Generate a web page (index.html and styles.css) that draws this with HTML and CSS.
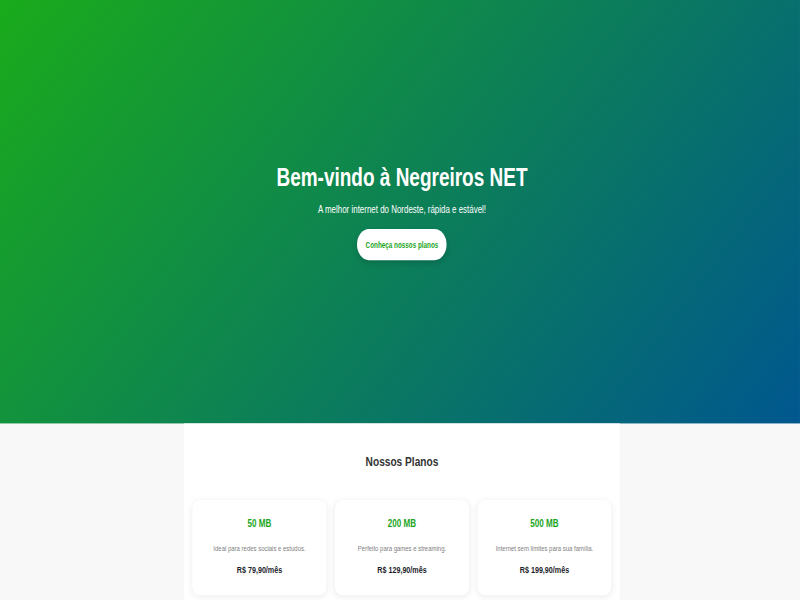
FILE: index.html
```html
<!DOCTYPE html>
<html lang="pt-BR">
<head>
<meta charset="UTF-8">
<title>Negreiros NET</title>
<link rel="stylesheet" href="styles.css">
</head>
<body>
<div class="page">
  <header class="hero">
    <h1 class="hero-title">Bem-vindo à Negreiros NET</h1>
    <p class="hero-sub">A melhor internet do Nordeste, rápida e estável!</p>
    <a class="hero-btn" href="#planos">Conheça nossos planos</a>
  </header>
  <main class="plans-wrap">
    <section class="plans" id="planos">
      <h2 class="plans-title">Nossos Planos</h2>
      <div class="plan-grid">
        <div class="plan-card">
          <h3 class="plan-name">50 MB</h3>
          <p class="plan-desc">Ideal para redes sociais e estudos.</p>
          <p class="plan-price">R$ 79,90/mês</p>
        </div>
        <div class="plan-card">
          <h3 class="plan-name">200 MB</h3>
          <p class="plan-desc">Perfeito para games e streaming.</p>
          <p class="plan-price">R$ 129,90/mês</p>
        </div>
        <div class="plan-card">
          <h3 class="plan-name">500 MB</h3>
          <p class="plan-desc">Internet sem limites para sua família.</p>
          <p class="plan-price">R$ 199,90/mês</p>
        </div>
      </div>
    </section>
  </main>
</div>
</body>
</html>
```
FILE: styles.css
```css
html, body {
  margin: 0;
  padding: 0;
  overflow: hidden;
  background: #f8f8f8;
}

.page {
  width: 1340px;
  transform: scale(0.597, 0.78125);
  transform-origin: 0 0;
  font-family: "Liberation Sans", Arial, sans-serif;
  background: #f8f8f8;
}

.hero {
  height: 542px;
  box-sizing: border-box;
  padding-left: 6.7px;
  display: flex;
  flex-direction: column;
  align-items: center;
  justify-content: center;
  background: linear-gradient(135deg, #1aab1b 0%, #00578f 100%);
  color: #fff;
  text-align: center;
}

.hero-title {
  margin: 0 0 15px;
  font-size: 31.8px;
  font-weight: bold;
}

.hero-sub {
  margin: 0 0 17px;
  font-size: 13.3px;
}

.hero-btn {
  display: inline-block;
  padding: 14px 14px;
  font-size: 10.6px;
  font-weight: bold;
  color: #1aa51c;
  background: #fff;
  border-radius: 20px;
  text-decoration: none;
  box-shadow: 0 4px 10px rgba(0, 0, 0, 0.15);
}

.plans-wrap {
  padding-left: 6.7px;
}

.plans {
  max-width: 730px;
  margin: 0 auto;
  padding: 39px 14px 40px;
  box-sizing: border-box;
  background: #fff;
}

.plans-title {
  margin: 0 0 39px;
  font-size: 17px;
  font-weight: bold;
  color: #333;
  text-align: center;
}

.plan-grid {
  display: grid;
  grid-template-columns: repeat(3, 1fr);
  gap: 14px;
}

.plan-card {
  background: #fff;
  border-radius: 12px;
  padding: 22px 10px 25px;
  text-align: center;
  box-shadow: 0 2px 10px rgba(0, 0, 0, 0.08);
}

.plan-name {
  margin: 0 0 19px;
  font-size: 13.5px;
  font-weight: bold;
  color: #1aa51c;
}

.plan-desc {
  margin: 0 0 16px;
  font-size: 10px;
  color: #808080;
}

.plan-price {
  margin: 0;
  font-size: 12px;
  font-weight: bold;
  color: #1c1c2a;
}
```
